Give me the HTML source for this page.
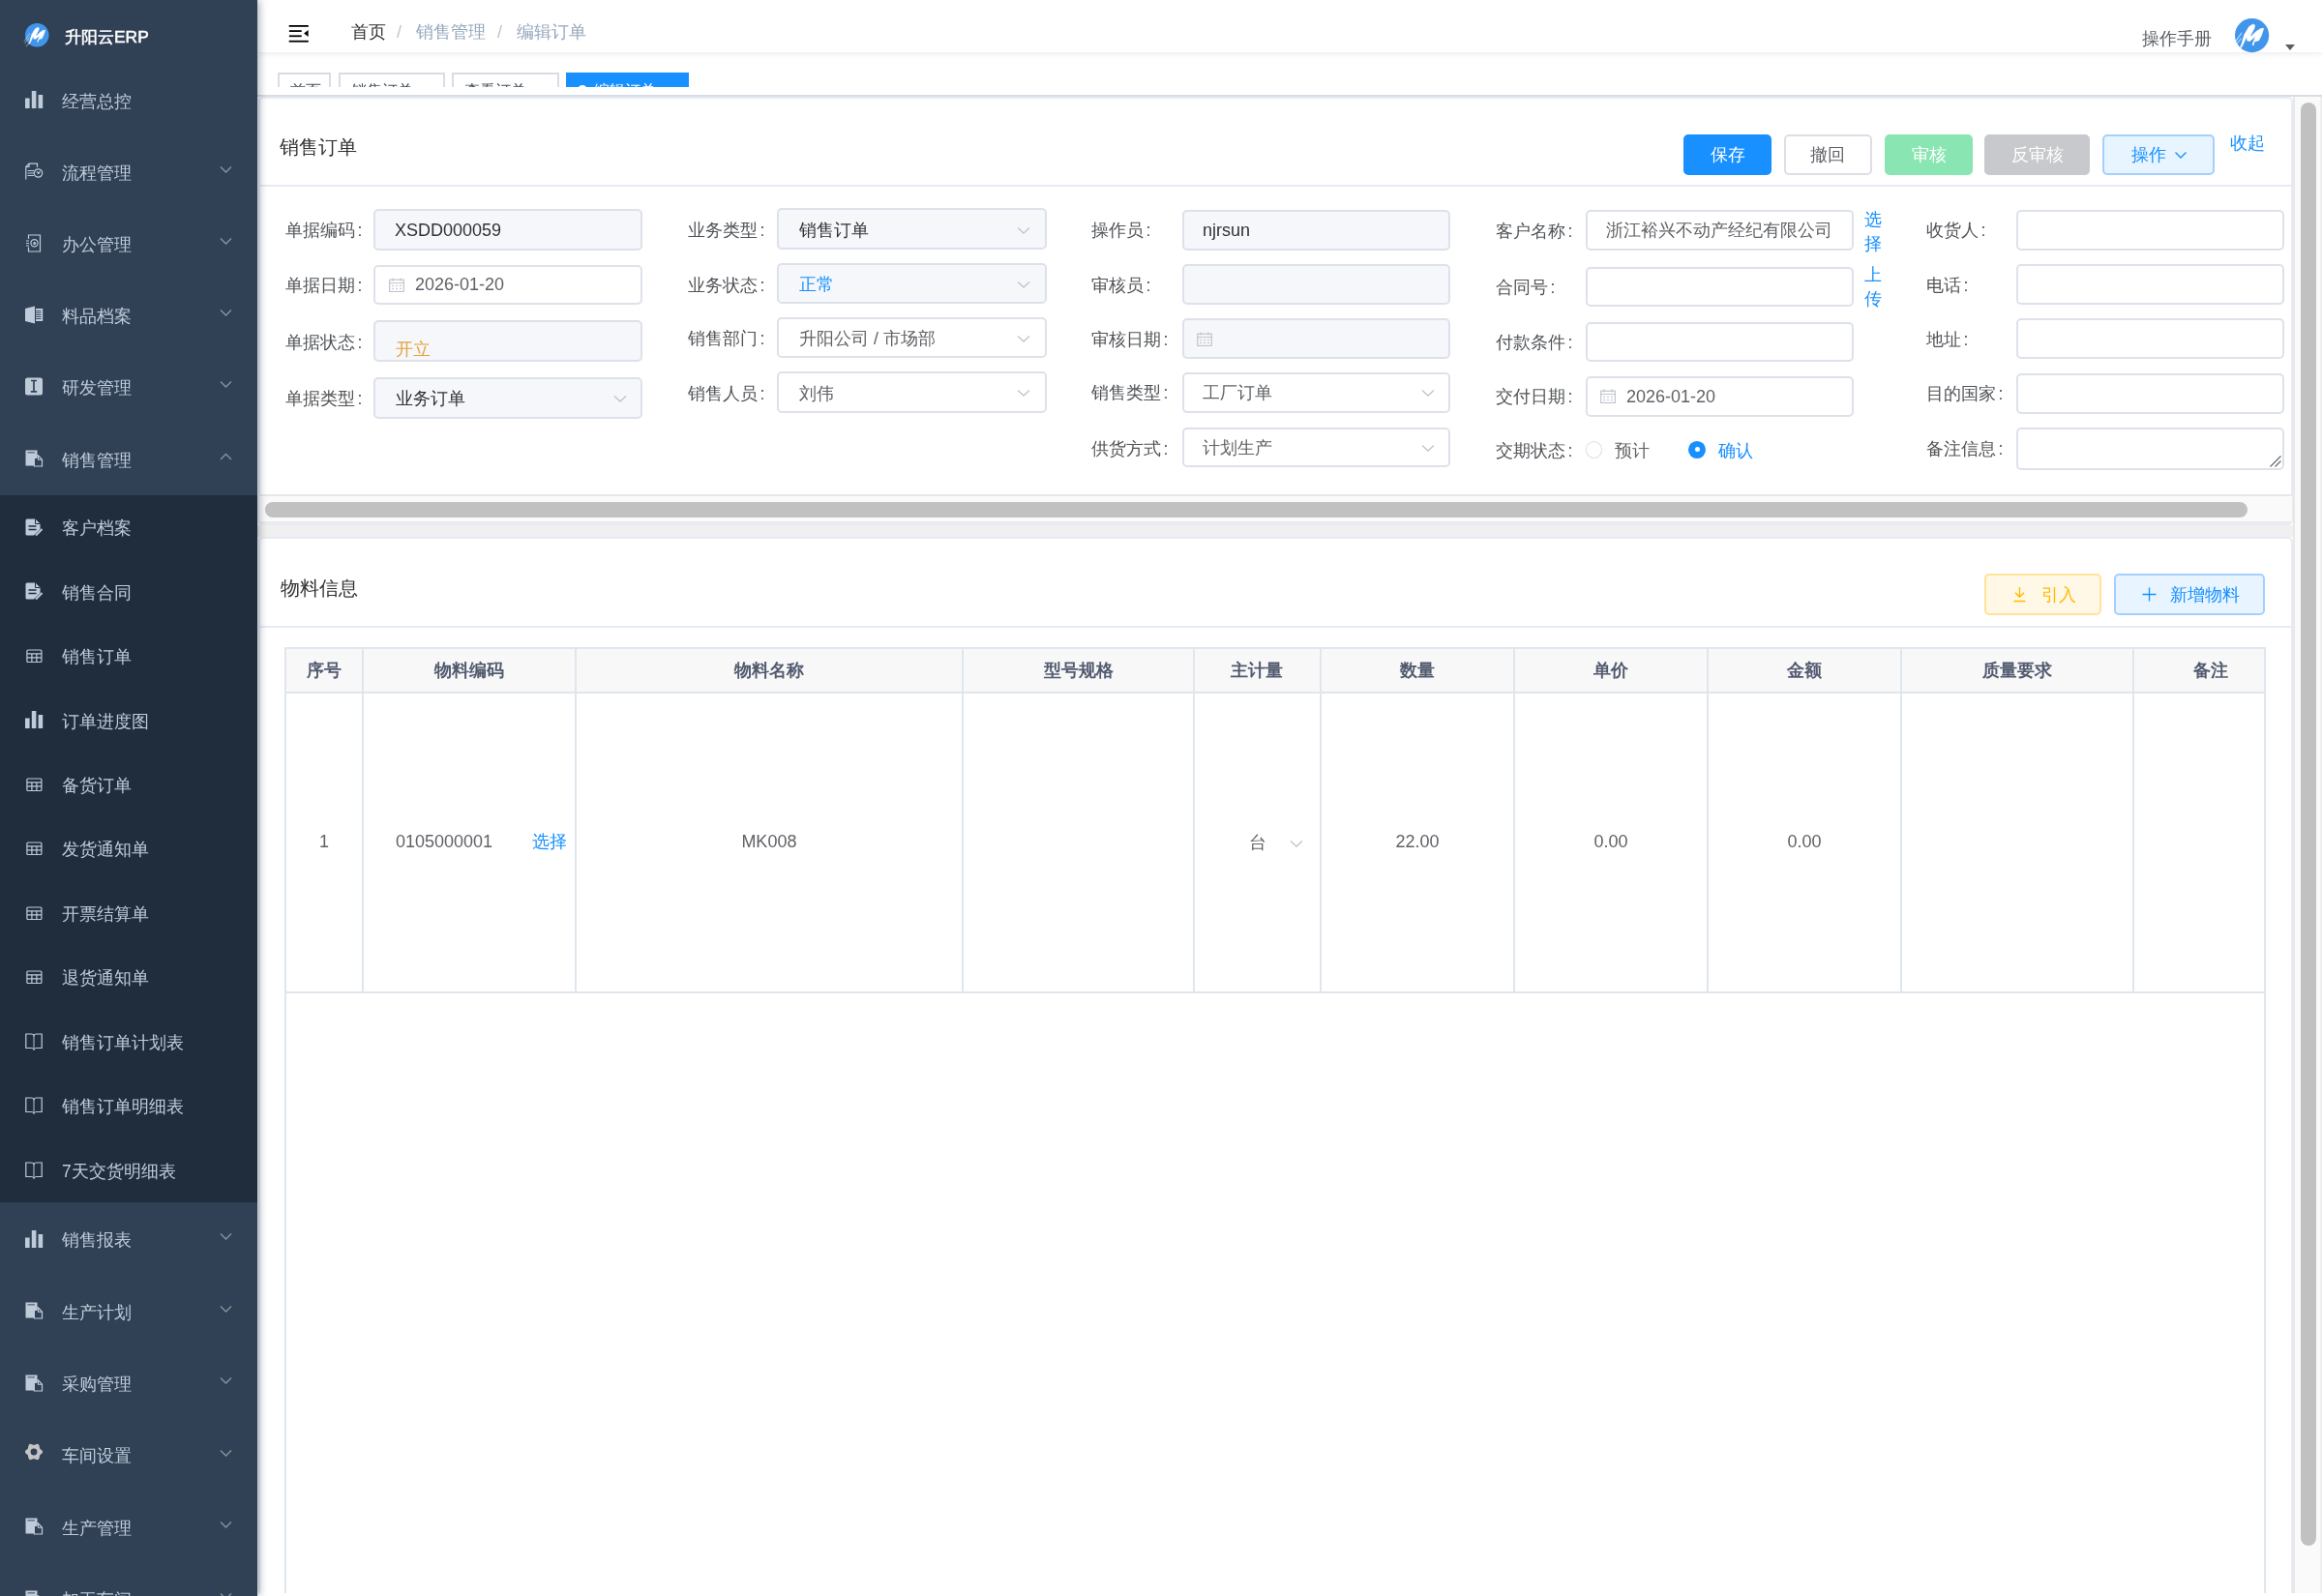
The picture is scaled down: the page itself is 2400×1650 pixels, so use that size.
<!DOCTYPE html><html><head><meta charset="utf-8"><style>
html,body{margin:0;padding:0;width:2400px;height:1650px;overflow:hidden;background:#fff;font-family:"Liberation Sans",sans-serif;}
.t{position:absolute;white-space:nowrap;will-change:transform;}
.r{position:absolute;box-sizing:border-box;}
</style></head><body>
<div class="r" style="left:266.00px;top:0.00px;width:2134.00px;height:1650.00px;background:#fff"></div>
<div class="r" style="left:266.00px;top:542.70px;width:2104.00px;height:12.30px;background:#f0f0f0"></div>
<div class="r" style="left:267.00px;top:100.00px;width:2103.00px;height:442.70px;border:2px solid #e6ebf5;border-radius:5px;background:#fff"></div>
<div class="r" style="left:268.00px;top:191.00px;width:2101.00px;height:2.00px;background:#e6ebf5"></div>
<div class="t" style="left:289.00px;top:136.70px;font-size:20.4px;line-height:30px;color:#303133;font-weight:normal;">销售订单</div>
<div class="r" style="left:1740.00px;top:139.00px;width:91.00px;height:42.00px;background:#1890ff;border:2px solid #1890ff;border-radius:5px"></div>
<div class="t" style="left:1740.00px;width:91.00px;text-align:center;top:145.00px;font-size:17.6px;line-height:30px;color:#fff;font-weight:normal;">保存</div>
<div class="r" style="left:1844.00px;top:139.00px;width:90.50px;height:42.00px;background:#fff;border:2px solid #dcdfe6;border-radius:5px"></div>
<div class="t" style="left:1844.00px;width:90.50px;text-align:center;top:145.00px;font-size:17.6px;line-height:30px;color:#606266;font-weight:normal;">撤回</div>
<div class="r" style="left:1948.00px;top:139.00px;width:91.00px;height:42.00px;background:#89e6b2;border:2px solid #89e6b2;border-radius:5px"></div>
<div class="t" style="left:1948.00px;width:91.00px;text-align:center;top:145.00px;font-size:17.6px;line-height:30px;color:#fff;font-weight:normal;">审核</div>
<div class="r" style="left:2050.60px;top:139.00px;width:109.40px;height:42.00px;background:#c8c9cc;border:2px solid #c8c9cc;border-radius:5px"></div>
<div class="t" style="left:2050.60px;width:109.40px;text-align:center;top:145.00px;font-size:17.6px;line-height:30px;color:#fff;font-weight:normal;">反审核</div>
<div class="r" style="left:2173.30px;top:139.00px;width:116.10px;height:42.00px;background:#e8f4ff;border:2px solid #a3d0fd;border-radius:5px"></div>
<div class="t" style="left:2202.50px;top:145.00px;font-size:17.6px;line-height:30px;color:#1890ff;font-weight:normal;">操作</div>
<svg class="r" style="left:2246.50px;top:155.00px;" width="14" height="10" viewBox="0 0 14 10"><path d="M1.5 2.5 L7 8 L12.5 2.5" fill="none" stroke="#1890ff" stroke-width="1.4"/></svg>
<div class="t" style="left:2305.00px;top:133.40px;font-size:17.6px;line-height:30px;color:#1890ff;font-weight:normal;">收起</div>
<div class="t" style="left:294.50px;top:223.10px;font-size:17.6px;line-height:30px;color:#505357;font-weight:normal;">单据编码<span style="display:inline-block;width:0.55em;text-align:center">:</span></div>
<div class="r" style="left:386.30px;top:216.40px;width:278.20px;height:43.00px;background:#f5f7fa;border:2px solid #dde1e9;border-radius:5px"></div>
<div class="t" style="left:294.50px;top:280.00px;font-size:17.6px;line-height:30px;color:#505357;font-weight:normal;">单据日期<span style="display:inline-block;width:0.55em;text-align:center">:</span></div>
<div class="r" style="left:386.30px;top:273.60px;width:278.20px;height:41.50px;background:#fff;border:2px solid #dde1e9;border-radius:5px"></div>
<div class="t" style="left:294.50px;top:338.80px;font-size:17.6px;line-height:30px;color:#505357;font-weight:normal;">单据状态<span style="display:inline-block;width:0.55em;text-align:center">:</span></div>
<div class="r" style="left:386.30px;top:331.40px;width:278.20px;height:42.90px;background:#f5f7fa;border:2px solid #dde1e9;border-radius:5px"></div>
<div class="t" style="left:294.50px;top:397.00px;font-size:17.6px;line-height:30px;color:#505357;font-weight:normal;">单据类型<span style="display:inline-block;width:0.55em;text-align:center">:</span></div>
<div class="r" style="left:386.30px;top:389.50px;width:278.20px;height:43.10px;background:#f5f7fa;border:2px solid #dde1e9;border-radius:5px"></div>
<div class="t" style="left:711.20px;top:223.10px;font-size:17.6px;line-height:30px;color:#505357;font-weight:normal;">业务类型<span style="display:inline-block;width:0.55em;text-align:center">:</span></div>
<div class="r" style="left:803.40px;top:215.20px;width:278.20px;height:43.00px;background:#f5f7fa;border:2px solid #dde1e9;border-radius:5px"></div>
<div class="t" style="left:711.20px;top:280.00px;font-size:17.6px;line-height:30px;color:#505357;font-weight:normal;">业务状态<span style="display:inline-block;width:0.55em;text-align:center">:</span></div>
<div class="r" style="left:803.40px;top:272.40px;width:278.20px;height:41.80px;background:#f5f7fa;border:2px solid #dde1e9;border-radius:5px"></div>
<div class="t" style="left:711.20px;top:335.30px;font-size:17.6px;line-height:30px;color:#505357;font-weight:normal;">销售部门<span style="display:inline-block;width:0.55em;text-align:center">:</span></div>
<div class="r" style="left:803.40px;top:328.30px;width:278.20px;height:41.90px;background:#fff;border:2px solid #dde1e9;border-radius:5px"></div>
<div class="t" style="left:711.20px;top:392.00px;font-size:17.6px;line-height:30px;color:#505357;font-weight:normal;">销售人员<span style="display:inline-block;width:0.55em;text-align:center">:</span></div>
<div class="r" style="left:803.40px;top:384.30px;width:278.20px;height:42.70px;background:#fff;border:2px solid #dde1e9;border-radius:5px"></div>
<div class="t" style="left:1128.30px;top:222.50px;font-size:17.6px;line-height:30px;color:#505357;font-weight:normal;">操作员<span style="display:inline-block;width:0.55em;text-align:center">:</span></div>
<div class="r" style="left:1221.50px;top:216.50px;width:277.20px;height:42.70px;background:#f5f7fa;border:2px solid #dde1e9;border-radius:5px"></div>
<div class="t" style="left:1128.30px;top:279.90px;font-size:17.6px;line-height:30px;color:#505357;font-weight:normal;">审核员<span style="display:inline-block;width:0.55em;text-align:center">:</span></div>
<div class="r" style="left:1221.50px;top:273.30px;width:277.20px;height:41.70px;background:#f5f7fa;border:2px solid #dde1e9;border-radius:5px"></div>
<div class="t" style="left:1128.30px;top:336.00px;font-size:17.6px;line-height:30px;color:#505357;font-weight:normal;">审核日期<span style="display:inline-block;width:0.55em;text-align:center">:</span></div>
<div class="r" style="left:1221.50px;top:329.30px;width:277.20px;height:41.70px;background:#f5f7fa;border:2px solid #dde1e9;border-radius:5px"></div>
<div class="t" style="left:1128.30px;top:391.30px;font-size:17.6px;line-height:30px;color:#505357;font-weight:normal;">销售类型<span style="display:inline-block;width:0.55em;text-align:center">:</span></div>
<div class="r" style="left:1221.50px;top:384.80px;width:277.20px;height:42.30px;background:#fff;border:2px solid #dde1e9;border-radius:5px"></div>
<div class="t" style="left:1128.30px;top:448.90px;font-size:17.6px;line-height:30px;color:#505357;font-weight:normal;">供货方式<span style="display:inline-block;width:0.55em;text-align:center">:</span></div>
<div class="r" style="left:1221.50px;top:441.50px;width:277.20px;height:41.80px;background:#fff;border:2px solid #dde1e9;border-radius:5px"></div>
<div class="t" style="left:1546.00px;top:223.80px;font-size:17.6px;line-height:30px;color:#505357;font-weight:normal;">客户名称<span style="display:inline-block;width:0.55em;text-align:center">:</span></div>
<div class="r" style="left:1638.50px;top:216.50px;width:277.80px;height:42.70px;background:#fff;border:2px solid #dde1e9;border-radius:5px"></div>
<div class="t" style="left:1546.00px;top:282.10px;font-size:17.6px;line-height:30px;color:#505357;font-weight:normal;">合同号<span style="display:inline-block;width:0.55em;text-align:center">:</span></div>
<div class="r" style="left:1638.50px;top:275.80px;width:277.80px;height:41.70px;background:#fff;border:2px solid #dde1e9;border-radius:5px"></div>
<div class="t" style="left:1546.00px;top:339.30px;font-size:17.6px;line-height:30px;color:#505357;font-weight:normal;">付款条件<span style="display:inline-block;width:0.55em;text-align:center">:</span></div>
<div class="r" style="left:1638.50px;top:332.70px;width:277.80px;height:41.70px;background:#fff;border:2px solid #dde1e9;border-radius:5px"></div>
<div class="t" style="left:1546.00px;top:395.00px;font-size:17.6px;line-height:30px;color:#505357;font-weight:normal;">交付日期<span style="display:inline-block;width:0.55em;text-align:center">:</span></div>
<div class="r" style="left:1638.50px;top:388.50px;width:277.80px;height:42.70px;background:#fff;border:2px solid #dde1e9;border-radius:5px"></div>
<div class="t" style="left:1546.00px;top:451.20px;font-size:17.6px;line-height:30px;color:#505357;font-weight:normal;">交期状态<span style="display:inline-block;width:0.55em;text-align:center">:</span></div>
<div class="t" style="left:1991.10px;top:223.00px;font-size:17.6px;line-height:30px;color:#505357;font-weight:normal;">收货人<span style="display:inline-block;width:0.55em;text-align:center">:</span></div>
<div class="r" style="left:2083.50px;top:216.50px;width:277.80px;height:42.70px;background:#fff;border:2px solid #dde1e9;border-radius:5px"></div>
<div class="t" style="left:1991.10px;top:279.60px;font-size:17.6px;line-height:30px;color:#505357;font-weight:normal;">电话<span style="display:inline-block;width:0.55em;text-align:center">:</span></div>
<div class="r" style="left:2083.50px;top:273.30px;width:277.80px;height:41.70px;background:#fff;border:2px solid #dde1e9;border-radius:5px"></div>
<div class="t" style="left:1991.10px;top:335.70px;font-size:17.6px;line-height:30px;color:#505357;font-weight:normal;">地址<span style="display:inline-block;width:0.55em;text-align:center">:</span></div>
<div class="r" style="left:2083.50px;top:329.30px;width:277.80px;height:41.70px;background:#fff;border:2px solid #dde1e9;border-radius:5px"></div>
<div class="t" style="left:1991.10px;top:391.80px;font-size:17.6px;line-height:30px;color:#505357;font-weight:normal;">目的国家<span style="display:inline-block;width:0.55em;text-align:center">:</span></div>
<div class="r" style="left:2083.50px;top:385.70px;width:277.80px;height:42.30px;background:#fff;border:2px solid #dde1e9;border-radius:5px"></div>
<div class="t" style="left:1991.10px;top:448.60px;font-size:17.6px;line-height:30px;color:#505357;font-weight:normal;">备注信息<span style="display:inline-block;width:0.55em;text-align:center">:</span></div>
<div class="r" style="left:2083.50px;top:441.50px;width:277.80px;height:44.80px;background:#fff;border:2px solid #dde1e9;border-radius:5px"></div>
<div class="t" style="left:407.50px;top:222.70px;font-size:18px;line-height:30px;color:#303133;font-weight:normal;">XSDD000059</div>
<svg class="r" style="left:402.00px;top:286.80px;" width="16" height="15" viewBox="0 0 16 15"><rect x="0.7" y="2.2" width="14.6" height="12.3" fill="none" stroke="#c0c4cc" stroke-width="1.2"/><line x1="0.7" y1="5.6" x2="15.3" y2="5.6" stroke="#c0c4cc" stroke-width="1"/><line x1="4" y1="0.5" x2="4" y2="3.5" stroke="#c0c4cc" stroke-width="1.2"/><line x1="12" y1="0.5" x2="12" y2="3.5" stroke="#c0c4cc" stroke-width="1.2"/><g fill="#c0c4cc"><rect x="3.3" y="7.8" width="1.6" height="1.4"/><rect x="7.2" y="7.8" width="1.6" height="1.4"/><rect x="11.1" y="7.8" width="1.6" height="1.4"/><rect x="3.3" y="10.8" width="1.6" height="1.4"/><rect x="7.2" y="10.8" width="1.6" height="1.4"/><rect x="11.1" y="10.8" width="1.6" height="1.4"/></g></svg>
<div class="t" style="left:428.50px;top:279.30px;font-size:18px;line-height:30px;color:#606266;font-weight:normal;">2026-01-20</div>
<div class="t" style="left:408.50px;top:345.60px;font-size:17.6px;line-height:30px;color:#e6a23c;font-weight:normal;">开立</div>
<div class="t" style="left:408.50px;top:397.00px;font-size:17.6px;line-height:30px;color:#303133;font-weight:normal;">业务订单</div>
<svg class="r" style="left:633.50px;top:407.60px;" width="14" height="9" viewBox="0 0 14 9"><path d="M1 1.5 L7.0 7 L13 1.5" fill="none" stroke="#c0c4cc" stroke-width="1.3"/></svg>
<div class="t" style="left:825.80px;top:223.00px;font-size:17.6px;line-height:30px;color:#303133;font-weight:normal;">销售订单</div>
<svg class="r" style="left:1050.60px;top:233.60px;" width="14" height="9" viewBox="0 0 14 9"><path d="M1 1.5 L7.0 7 L13 1.5" fill="none" stroke="#c0c4cc" stroke-width="1.3"/></svg>
<div class="t" style="left:825.80px;top:279.20px;font-size:17.6px;line-height:30px;color:#1890ff;font-weight:normal;">正常</div>
<svg class="r" style="left:1050.60px;top:289.70px;" width="14" height="9" viewBox="0 0 14 9"><path d="M1 1.5 L7.0 7 L13 1.5" fill="none" stroke="#c0c4cc" stroke-width="1.3"/></svg>
<div class="t" style="left:825.80px;top:335.30px;font-size:17.6px;line-height:30px;color:#606266;font-weight:normal;">升阳公司 / 市场部</div>
<svg class="r" style="left:1050.60px;top:345.90px;" width="14" height="9" viewBox="0 0 14 9"><path d="M1 1.5 L7.0 7 L13 1.5" fill="none" stroke="#c0c4cc" stroke-width="1.3"/></svg>
<div class="t" style="left:825.80px;top:391.50px;font-size:17.6px;line-height:30px;color:#606266;font-weight:normal;">刘伟</div>
<svg class="r" style="left:1050.60px;top:402.10px;" width="14" height="9" viewBox="0 0 14 9"><path d="M1 1.5 L7.0 7 L13 1.5" fill="none" stroke="#c0c4cc" stroke-width="1.3"/></svg>
<div class="t" style="left:1242.50px;top:223.00px;font-size:18px;line-height:30px;color:#303133;font-weight:normal;">njrsun</div>
<svg class="r" style="left:1237.00px;top:343.00px;" width="16" height="15" viewBox="0 0 16 15"><rect x="0.7" y="2.2" width="14.6" height="12.3" fill="none" stroke="#c0c4cc" stroke-width="1.2"/><line x1="0.7" y1="5.6" x2="15.3" y2="5.6" stroke="#c0c4cc" stroke-width="1"/><line x1="4" y1="0.5" x2="4" y2="3.5" stroke="#c0c4cc" stroke-width="1.2"/><line x1="12" y1="0.5" x2="12" y2="3.5" stroke="#c0c4cc" stroke-width="1.2"/><g fill="#c0c4cc"><rect x="3.3" y="7.8" width="1.6" height="1.4"/><rect x="7.2" y="7.8" width="1.6" height="1.4"/><rect x="11.1" y="7.8" width="1.6" height="1.4"/><rect x="3.3" y="10.8" width="1.6" height="1.4"/><rect x="7.2" y="10.8" width="1.6" height="1.4"/><rect x="11.1" y="10.8" width="1.6" height="1.4"/></g></svg>
<div class="t" style="left:1242.80px;top:391.30px;font-size:17.6px;line-height:30px;color:#606266;font-weight:normal;">工厂订单</div>
<svg class="r" style="left:1469.00px;top:401.80px;" width="14" height="9" viewBox="0 0 14 9"><path d="M1 1.5 L7.0 7 L13 1.5" fill="none" stroke="#c0c4cc" stroke-width="1.3"/></svg>
<div class="t" style="left:1242.80px;top:448.00px;font-size:17.6px;line-height:30px;color:#606266;font-weight:normal;">计划生产</div>
<svg class="r" style="left:1469.00px;top:458.50px;" width="14" height="9" viewBox="0 0 14 9"><path d="M1 1.5 L7.0 7 L13 1.5" fill="none" stroke="#c0c4cc" stroke-width="1.3"/></svg>
<div class="t" style="left:1660.00px;top:223.00px;font-size:17.6px;line-height:30px;color:#606266;font-weight:normal;">浙江裕兴不动产经纪有限公司</div>
<svg class="r" style="left:1654.00px;top:402.00px;" width="16" height="15" viewBox="0 0 16 15"><rect x="0.7" y="2.2" width="14.6" height="12.3" fill="none" stroke="#c0c4cc" stroke-width="1.2"/><line x1="0.7" y1="5.6" x2="15.3" y2="5.6" stroke="#c0c4cc" stroke-width="1"/><line x1="4" y1="0.5" x2="4" y2="3.5" stroke="#c0c4cc" stroke-width="1.2"/><line x1="12" y1="0.5" x2="12" y2="3.5" stroke="#c0c4cc" stroke-width="1.2"/><g fill="#c0c4cc"><rect x="3.3" y="7.8" width="1.6" height="1.4"/><rect x="7.2" y="7.8" width="1.6" height="1.4"/><rect x="11.1" y="7.8" width="1.6" height="1.4"/><rect x="3.3" y="10.8" width="1.6" height="1.4"/><rect x="7.2" y="10.8" width="1.6" height="1.4"/><rect x="11.1" y="10.8" width="1.6" height="1.4"/></g></svg>
<div class="t" style="left:1680.50px;top:394.80px;font-size:18px;line-height:30px;color:#606266;font-weight:normal;">2026-01-20</div>
<div class="t" style="left:1927.00px;top:211.60px;font-size:17.6px;line-height:30px;color:#1890ff;font-weight:normal;">选</div>
<div class="t" style="left:1927.00px;top:236.90px;font-size:17.6px;line-height:30px;color:#1890ff;font-weight:normal;">择</div>
<div class="t" style="left:1927.00px;top:268.60px;font-size:17.6px;line-height:30px;color:#1890ff;font-weight:normal;">上</div>
<div class="t" style="left:1927.00px;top:294.30px;font-size:17.6px;line-height:30px;color:#1890ff;font-weight:normal;">传</div>
<div class="r" style="left:1638.50px;top:456.00px;width:17.10px;height:17.50px;border:1px solid #dcdfe6;border-radius:50%;background:#fff"></div>
<div class="t" style="left:1668.50px;top:451.20px;font-size:17.6px;line-height:30px;color:#606266;font-weight:normal;">预计</div>
<div class="r" style="left:1745.20px;top:456.00px;width:17.80px;height:17.80px;background:#1890ff;border-radius:50%"></div>
<div class="r" style="left:1751.60px;top:462.40px;width:5.00px;height:5.00px;background:#fff;border-radius:50%"></div>
<div class="t" style="left:1776.00px;top:451.20px;font-size:17.6px;line-height:30px;color:#1890ff;font-weight:normal;">确认</div>
<svg class="r" style="left:2345.00px;top:470.00px;" width="14" height="14" viewBox="0 0 14 14"><path d="M1.5 12.5 L12.5 1.5 M6.5 12.5 L12.5 6.5" stroke="#606266" stroke-width="1.1"/></svg>
<div class="r" style="left:268.00px;top:511.00px;width:2101.00px;height:1.70px;background:#e8e8e8"></div>
<div class="r" style="left:268.00px;top:512.70px;width:2101.00px;height:26.60px;background:#fafafa"></div>
<div class="r" style="left:268.00px;top:539.30px;width:2101.00px;height:1.70px;background:#ebebeb"></div>
<div class="r" style="left:273.80px;top:518.90px;width:2049.20px;height:15.90px;background:#c1c1c1;border-radius:8px"></div>
<div class="r" style="left:267.00px;top:555.00px;width:2103.00px;height:1145.00px;border:2px solid #e6ebf5;border-radius:5px;background:#fff"></div>
<div class="r" style="left:268.00px;top:647.00px;width:2101.00px;height:2.00px;background:#e6ebf5"></div>
<div class="t" style="left:289.50px;top:593.20px;font-size:20.4px;line-height:30px;color:#303133;font-weight:normal;">物料信息</div>
<div class="r" style="left:2051.40px;top:593.40px;width:120.30px;height:43.00px;background:#fff8e6;border:2px solid #ffe399;border-radius:5px"></div>
<svg class="r" style="left:2080.00px;top:605.50px;" width="15" height="17" viewBox="0 0 15 17"><path d="M7.5 1 V11 M3 6.8 L7.5 11.3 L12 6.8 M1.5 15.5 H13.5" fill="none" stroke="#ffba00" stroke-width="1.4"/></svg>
<div class="t" style="left:2109.50px;top:599.90px;font-size:17.6px;line-height:30px;color:#ffba00;font-weight:normal;">引入</div>
<div class="r" style="left:2185.30px;top:593.40px;width:156.10px;height:43.00px;background:#e8f4ff;border:2px solid #a3d0fd;border-radius:5px"></div>
<svg class="r" style="left:2214.00px;top:607.00px;" width="15" height="15" viewBox="0 0 15 15"><path d="M7.5 0.5 V14.5 M0.5 7.5 H14.5" fill="none" stroke="#1890ff" stroke-width="1.3"/></svg>
<div class="t" style="left:2243.00px;top:599.90px;font-size:17.6px;line-height:30px;color:#1890ff;font-weight:normal;">新增物料</div>
<div class="r" style="left:294.60px;top:669.50px;width:2047.00px;height:46.50px;background:#f8f8f9"></div>
<div class="r" style="left:294.00px;top:669.00px;width:2047.60px;height:2.00px;background:#dfe6ec"></div>
<div class="r" style="left:294.00px;top:715.00px;width:2047.60px;height:2.00px;background:#dfe6ec"></div>
<div class="r" style="left:294.00px;top:1025.00px;width:2047.60px;height:2.00px;background:#dfe6ec"></div>
<div class="r" style="left:293.60px;top:669.30px;width:2.00px;height:977.70px;background:#dfe6ec"></div>
<div class="r" style="left:373.70px;top:669.30px;width:2.00px;height:356.70px;background:#dfe6ec"></div>
<div class="r" style="left:593.90px;top:669.30px;width:2.00px;height:356.70px;background:#dfe6ec"></div>
<div class="r" style="left:993.70px;top:669.30px;width:2.00px;height:356.70px;background:#dfe6ec"></div>
<div class="r" style="left:1233.30px;top:669.30px;width:2.00px;height:356.70px;background:#dfe6ec"></div>
<div class="r" style="left:1363.60px;top:669.30px;width:2.00px;height:356.70px;background:#dfe6ec"></div>
<div class="r" style="left:1563.50px;top:669.30px;width:2.00px;height:356.70px;background:#dfe6ec"></div>
<div class="r" style="left:1763.70px;top:669.30px;width:2.00px;height:356.70px;background:#dfe6ec"></div>
<div class="r" style="left:1963.90px;top:669.30px;width:2.00px;height:356.70px;background:#dfe6ec"></div>
<div class="r" style="left:2204.10px;top:669.30px;width:2.00px;height:356.70px;background:#dfe6ec"></div>
<div class="r" style="left:2339.60px;top:669.30px;width:2.00px;height:977.70px;background:#dfe6ec"></div>
<div class="t" style="left:294.60px;width:80.10px;text-align:center;top:677.60px;font-size:17.6px;line-height:30px;color:#515a6e;font-weight:bold;">序号</div>
<div class="t" style="left:374.70px;width:220.20px;text-align:center;top:677.60px;font-size:17.6px;line-height:30px;color:#515a6e;font-weight:bold;">物料编码</div>
<div class="t" style="left:594.90px;width:399.80px;text-align:center;top:677.60px;font-size:17.6px;line-height:30px;color:#515a6e;font-weight:bold;">物料名称</div>
<div class="t" style="left:994.70px;width:239.60px;text-align:center;top:677.60px;font-size:17.6px;line-height:30px;color:#515a6e;font-weight:bold;">型号规格</div>
<div class="t" style="left:1234.30px;width:130.30px;text-align:center;top:677.60px;font-size:17.6px;line-height:30px;color:#515a6e;font-weight:bold;">主计量</div>
<div class="t" style="left:1364.60px;width:199.90px;text-align:center;top:677.60px;font-size:17.6px;line-height:30px;color:#515a6e;font-weight:bold;">数量</div>
<div class="t" style="left:1564.50px;width:200.20px;text-align:center;top:677.60px;font-size:17.6px;line-height:30px;color:#515a6e;font-weight:bold;">单价</div>
<div class="t" style="left:1764.70px;width:200.20px;text-align:center;top:677.60px;font-size:17.6px;line-height:30px;color:#515a6e;font-weight:bold;">金额</div>
<div class="t" style="left:1964.90px;width:240.20px;text-align:center;top:677.60px;font-size:17.6px;line-height:30px;color:#515a6e;font-weight:bold;">质量要求</div>
<div class="t" style="left:2205.10px;width:159.50px;text-align:center;top:677.60px;font-size:17.6px;line-height:30px;color:#515a6e;font-weight:bold;">备注</div>
<div class="t" style="left:294.60px;width:80.10px;text-align:center;top:855.30px;font-size:18px;line-height:30px;color:#606266;font-weight:normal;">1</div>
<div class="t" style="left:408.80px;top:855.30px;font-size:18px;line-height:30px;color:#606266;font-weight:normal;">0105000001</div>
<div class="t" style="left:550.00px;top:855.30px;font-size:17.6px;line-height:30px;color:#1890ff;font-weight:normal;">选择</div>
<div class="t" style="left:594.90px;width:399.80px;text-align:center;top:855.30px;font-size:18px;line-height:30px;color:#606266;font-weight:normal;">MK008</div>
<div class="t" style="left:1291.00px;top:855.80px;font-size:17.6px;line-height:30px;color:#606266;font-weight:normal;">台</div>
<svg class="r" style="left:1332.60px;top:867.50px;" width="14" height="9" viewBox="0 0 14 9"><path d="M1 1.5 L7.0 7 L13 1.5" fill="none" stroke="#c0c4cc" stroke-width="1.3"/></svg>
<div class="t" style="left:1364.60px;width:199.90px;text-align:center;top:855.30px;font-size:18px;line-height:30px;color:#606266;font-weight:normal;">22.00</div>
<div class="t" style="left:1564.50px;width:200.20px;text-align:center;top:855.30px;font-size:18px;line-height:30px;color:#606266;font-weight:normal;">0.00</div>
<div class="t" style="left:1764.70px;width:200.20px;text-align:center;top:855.30px;font-size:18px;line-height:30px;color:#606266;font-weight:normal;">0.00</div>
<div class="r" style="left:2370.00px;top:100.00px;width:2.00px;height:1550.00px;background:#e8e8e8"></div>
<div class="r" style="left:2372.00px;top:100.00px;width:26.00px;height:1550.00px;background:#fafafa"></div>
<div class="r" style="left:2398.00px;top:100.00px;width:2.00px;height:1550.00px;background:#efefef"></div>
<div class="r" style="left:2378.00px;top:106.00px;width:16.00px;height:1492.00px;background:#c1c1c1;border-radius:8px"></div>
<div class="r" style="left:266.00px;top:1647.00px;width:2134.00px;height:3.00px;background:#fff"></div>
<div class="r" style="left:266.00px;top:54.00px;width:2134.00px;height:44.00px;background:#fff"></div>
<div class="r" style="left:266.00px;top:97.80px;width:2134.00px;height:2.20px;background:#d8dce5"></div>
<div class="r" style="left:266px;top:54px;width:2134px;height:35.7px;overflow:hidden">
<div class="r" style="left:21.20px;top:20.90px;width:54.50px;height:36px;background:#fff;border:2px solid #d8dce5"></div>
<div class="t" style="left:33.70px;top:25.90px;font-size:16px;line-height:28px;color:#495060">首页</div>
<div class="r" style="left:84.20px;top:20.90px;width:109.50px;height:36px;background:#fff;border:2px solid #d8dce5"></div>
<div class="t" style="left:96.70px;top:25.90px;font-size:16px;line-height:28px;color:#495060">销售订单</div>
<div class="r" style="left:201.00px;top:20.90px;width:110.50px;height:36px;background:#fff;border:2px solid #d8dce5"></div>
<div class="t" style="left:213.50px;top:25.90px;font-size:16px;line-height:28px;color:#495060">查看订单</div>
<div class="r" style="left:318.90px;top:20.90px;width:126.70px;height:36px;background:#1890ff;border:1px solid #1890ff"></div>
<div class="r" style="left:330.90px;top:33.90px;width:10px;height:10px;border-radius:50%;background:#fff"></div>
<div class="t" style="left:347.90px;top:25.90px;font-size:16px;line-height:28px;color:#fff">编辑订单</div>
</div>
<div class="r" style="left:266.00px;top:0.00px;width:2134.00px;height:54.00px;background:#fff;box-shadow:0 1px 6px rgba(0,21,41,.1)"></div>
<svg class="r" style="left:298.00px;top:25.00px;" width="22" height="20" viewBox="0 0 22 20"><rect x="0.7" y="1" width="20.1" height="1.8" fill="#000"/><rect x="0.9" y="6.2" width="12.8" height="1.8" fill="#000"/><rect x="0.9" y="11.4" width="12.8" height="1.8" fill="#000"/><rect x="0.7" y="16.8" width="20.1" height="1.8" fill="#000"/><path d="M20.6 6.1 L16.1 9.5 L20.6 12.9 Z" fill="#000"/></svg>
<div class="t" style="left:362.50px;top:17.70px;font-size:17.6px;line-height:30px;color:#303133;font-weight:normal;">首页</div>
<div class="t" style="left:410.00px;top:17.70px;font-size:18px;line-height:30px;color:#c0c4cc;font-weight:normal;">/</div>
<div class="t" style="left:430.30px;top:17.70px;font-size:17.6px;line-height:30px;color:#97a8be;font-weight:normal;">销售管理</div>
<div class="t" style="left:514.00px;top:17.70px;font-size:18px;line-height:30px;color:#c0c4cc;font-weight:normal;">/</div>
<div class="t" style="left:534.30px;top:17.70px;font-size:17.6px;line-height:30px;color:#97a8be;font-weight:normal;">编辑订单</div>
<div class="t" style="left:2213.50px;top:24.60px;font-size:17.6px;line-height:30px;color:#5a5e66;font-weight:normal;">操作手册</div>
<svg class="r" style="left:2310.00px;top:18.50px;overflow:visible" width="35.2" height="35.2" viewBox="0 0 35.2 35.2"><circle cx="17.6" cy="17.6" r="17.6" fill="#4196ec"/><g transform="scale(1.0000)"><polygon points="5.60,31.20 9.60,17.00 14.60,8.60 18.73,5.93 20.62,7.01 20.08,10.24 16.04,17.79 16.58,18.87 21.97,13.48 26.82,10.51 29.78,10.24 27.36,17.79 24.66,22.91 21.97,23.45 20.08,24.26 19.27,27.76 17.92,27.22 21.43,18.60 15.50,23.45 12.80,23.18 12.26,18.87 7.60,28.60" fill="#fff" stroke="#fff" stroke-width="0.6" stroke-linejoin="round"/><path d="M-1.5 26.8 L7 14.8 M-0.5 30 L6.5 20.5 M1.5 34.5 L7 27.5" stroke="#fff" stroke-opacity=".6" stroke-width="1.2"/></g></svg>
<svg class="r" style="left:2362.00px;top:46.00px;" width="10" height="6.5" viewBox="0 0 10 6.5"><path d="M0 0 H10 L5 6 Z" fill="#5a5e66"/></svg>
<div class="r" style="left:0.00px;top:0.00px;width:266.00px;height:1650.00px;background:#304156;box-shadow:2px 0 8px rgba(0,21,41,.35)"></div>
<div class="r" style="left:0.00px;top:512.00px;width:266.00px;height:731.30px;background:#1f2d3d"></div>
<svg class="r" style="left:26.35px;top:24.15px;overflow:visible" width="24.5" height="24.5" viewBox="0 0 24.5 24.5"><circle cx="12.25" cy="12.25" r="12.25" fill="#4196ec"/><g transform="scale(0.6960)"><polygon points="5.60,31.20 9.60,17.00 14.60,8.60 18.73,5.93 20.62,7.01 20.08,10.24 16.04,17.79 16.58,18.87 21.97,13.48 26.82,10.51 29.78,10.24 27.36,17.79 24.66,22.91 21.97,23.45 20.08,24.26 19.27,27.76 17.92,27.22 21.43,18.60 15.50,23.45 12.80,23.18 12.26,18.87 7.60,28.60" fill="#fff" stroke="#fff" stroke-width="0.6" stroke-linejoin="round"/><path d="M-1.5 26.8 L7 14.8 M-0.5 30 L6.5 20.5 M1.5 34.5 L7 27.5" stroke="#fff" stroke-opacity=".6" stroke-width="1.2"/></g></svg>
<div class="t" style="left:66.50px;top:22.90px;font-size:17.4px;line-height:30px;color:#fff;font-weight:normal;-webkit-text-stroke:0.5px #fff">升阳云ERP</div>
<svg class="r" style="left:25.80px;top:94.20px;" width="19" height="19" viewBox="0 0 19 19"><g fill="#bfcbd9"><rect x="0" y="7.5" width="4.6" height="10.5"/><rect x="6.8" y="0" width="4.6" height="18"/><rect x="13.6" y="4" width="4.6" height="14"/></g></svg>
<div class="t" style="left:64.00px;top:89.60px;font-size:17.6px;line-height:30px;color:#bfcbd9;font-weight:normal;">经营总控</div>
<svg class="r" style="left:25.80px;top:168.10px;" width="19" height="19" viewBox="0 0 19 19"><g fill="none" stroke="#bfcbd9" stroke-width="1.2"><path d="M0.8 17.5 V4.5 L4 1.2 H12.5 V5"/><path d="M4 1.2 V4.5 H0.8"/><path d="M2.5 8.5 H9 M2.5 11 H9 M2.5 13.5 H9"/><circle cx="13.5" cy="11" r="4.2"/><path d="M12 9.5 L13.8 11.5 L15.5 9"/></g></svg>
<div class="t" style="left:64.00px;top:163.80px;font-size:17.6px;line-height:30px;color:#bfcbd9;font-weight:normal;">流程管理</div>
<svg class="r" style="left:226.50px;top:171.00px;" width="13" height="9" viewBox="0 0 13 9"><path d="M1 1.5 L6.5 7 L12 1.5" fill="none" stroke="#909399" stroke-width="1.3"/></svg>
<svg class="r" style="left:25.80px;top:242.20px;" width="19" height="19" viewBox="0 0 19 19"><g fill="none" stroke="#bfcbd9" stroke-width="1.2"><path d="M3.5 5 V1 H15.5 V18 H3.5 V13.5"/><path d="M1 7 H4 M1 9.5 H4 M1 12 H4"/><circle cx="9.5" cy="9.2" r="3.6"/></g><circle cx="9.7" cy="9.4" r="1.5" fill="#bfcbd9"/></svg>
<div class="t" style="left:64.00px;top:237.60px;font-size:17.6px;line-height:30px;color:#bfcbd9;font-weight:normal;">办公管理</div>
<svg class="r" style="left:226.50px;top:244.80px;" width="13" height="9" viewBox="0 0 13 9"><path d="M1 1.5 L6.5 7 L12 1.5" fill="none" stroke="#909399" stroke-width="1.3"/></svg>
<svg class="r" style="left:25.80px;top:316.00px;" width="19" height="19" viewBox="0 0 19 19"><path d="M0 3 L10 0.5 V18.5 L0 16 Z" fill="#bfcbd9"/><rect x="11" y="3" width="7.2" height="13" fill="#bfcbd9"/><g stroke="#304156" stroke-width="0.9"><path d="M11 5.5 H16.5 M11 7.5 H16.5 M11 9.5 H16.5 M11 11.5 H16.5 M11 13.5 H16.5"/></g></svg>
<div class="t" style="left:64.00px;top:311.70px;font-size:17.6px;line-height:30px;color:#bfcbd9;font-weight:normal;">料品档案</div>
<svg class="r" style="left:226.50px;top:318.90px;" width="13" height="9" viewBox="0 0 13 9"><path d="M1 1.5 L6.5 7 L12 1.5" fill="none" stroke="#909399" stroke-width="1.3"/></svg>
<svg class="r" style="left:25.80px;top:390.20px;" width="19" height="19" viewBox="0 0 19 19"><rect x="0" y="0.5" width="18" height="18" rx="2.5" fill="#bfcbd9"/><path d="M6 3.5 H12 M9 3.5 V14.8 M5.8 14.8 H12.2" stroke="#304156" stroke-width="1.7" fill="none"/></svg>
<div class="t" style="left:64.00px;top:385.90px;font-size:17.6px;line-height:30px;color:#bfcbd9;font-weight:normal;">研发管理</div>
<svg class="r" style="left:226.50px;top:393.10px;" width="13" height="9" viewBox="0 0 13 9"><path d="M1 1.5 L6.5 7 L12 1.5" fill="none" stroke="#909399" stroke-width="1.3"/></svg>
<svg class="r" style="left:25.80px;top:465.20px;" width="19" height="19" viewBox="0 0 19 19"><path d="M0.5 0.5 H12.5 V9 H9 V16.5 H0.5 Z" fill="#bfcbd9"/><rect x="2.5" y="2" width="7.5" height="1.6" fill="#304156" opacity=".6"/><path d="M9.4 5.8 H13.5 L17.5 10.3 V17 H9.4 Z" fill="none" stroke="#bfcbd9" stroke-width="1.2"/><path d="M13.5 5.8 V10.3 H17.5" fill="none" stroke="#bfcbd9" stroke-width="1.1"/></svg>
<div class="t" style="left:64.00px;top:460.60px;font-size:17.6px;line-height:30px;color:#bfcbd9;font-weight:normal;">销售管理</div>
<svg class="r" style="left:226.50px;top:467.80px;" width="13" height="9" viewBox="0 0 13 9"><path d="M1 7 L6.5 1.5 L12 7" fill="none" stroke="#909399" stroke-width="1.3"/></svg>
<svg class="r" style="left:25.80px;top:535.80px;" width="19" height="19" viewBox="0 0 19 19"><path d="M2 0.5 H10.5 L15.5 5.5 V11 L9 17.5 H2 Q0.5 17.5 0.5 16 V2 Q0.5 0.5 2 0.5 Z" fill="#bfcbd9"/><path d="M10.5 0.5 V5.5 H15.5" fill="none" stroke="#1f2d3d" stroke-width="1"/><path d="M3.5 8 H11.5 M3.5 11.5 H11.5" stroke="#1f2d3d" stroke-width="1.6"/><path d="M11 17.5 L17.5 11" stroke="#bfcbd9" stroke-width="2"/></svg>
<div class="t" style="left:64.00px;top:531.20px;font-size:17.6px;line-height:30px;color:#bfcbd9;font-weight:normal;">客户档案</div>
<svg class="r" style="left:25.80px;top:602.25px;" width="19" height="19" viewBox="0 0 19 19"><path d="M2 0.5 H10.5 L15.5 5.5 V11 L9 17.5 H2 Q0.5 17.5 0.5 16 V2 Q0.5 0.5 2 0.5 Z" fill="#bfcbd9"/><path d="M10.5 0.5 V5.5 H15.5" fill="none" stroke="#1f2d3d" stroke-width="1"/><path d="M3.5 8 H11.5 M3.5 11.5 H11.5" stroke="#1f2d3d" stroke-width="1.6"/><path d="M11 17.5 L17.5 11" stroke="#bfcbd9" stroke-width="2"/></svg>
<div class="t" style="left:64.00px;top:597.65px;font-size:17.6px;line-height:30px;color:#bfcbd9;font-weight:normal;">销售合同</div>
<svg class="r" style="left:25.80px;top:668.70px;" width="19" height="19" viewBox="0 0 19 19"><g fill="none" stroke="#bfcbd9" stroke-width="1.2"><rect x="1.9" y="3" width="15" height="12.5" rx="1"/><path d="M1.9 6.8 H16.9 M1.9 10.8 H16.9 M6.9 6.8 V15.5 M11.9 6.8 V15.5"/></g></svg>
<div class="t" style="left:64.00px;top:664.10px;font-size:17.6px;line-height:30px;color:#bfcbd9;font-weight:normal;">销售订单</div>
<svg class="r" style="left:25.80px;top:735.15px;" width="19" height="19" viewBox="0 0 19 19"><g fill="#bfcbd9"><rect x="0" y="7.5" width="4.6" height="10.5"/><rect x="6.8" y="0" width="4.6" height="18"/><rect x="13.6" y="4" width="4.6" height="14"/></g></svg>
<div class="t" style="left:64.00px;top:730.55px;font-size:17.6px;line-height:30px;color:#bfcbd9;font-weight:normal;">订单进度图</div>
<svg class="r" style="left:25.80px;top:801.60px;" width="19" height="19" viewBox="0 0 19 19"><g fill="none" stroke="#bfcbd9" stroke-width="1.2"><rect x="1.9" y="3" width="15" height="12.5" rx="1"/><path d="M1.9 6.8 H16.9 M1.9 10.8 H16.9 M6.9 6.8 V15.5 M11.9 6.8 V15.5"/></g></svg>
<div class="t" style="left:64.00px;top:797.00px;font-size:17.6px;line-height:30px;color:#bfcbd9;font-weight:normal;">备货订单</div>
<svg class="r" style="left:25.80px;top:868.05px;" width="19" height="19" viewBox="0 0 19 19"><g fill="none" stroke="#bfcbd9" stroke-width="1.2"><rect x="1.9" y="3" width="15" height="12.5" rx="1"/><path d="M1.9 6.8 H16.9 M1.9 10.8 H16.9 M6.9 6.8 V15.5 M11.9 6.8 V15.5"/></g></svg>
<div class="t" style="left:64.00px;top:863.45px;font-size:17.6px;line-height:30px;color:#bfcbd9;font-weight:normal;">发货通知单</div>
<svg class="r" style="left:25.80px;top:934.50px;" width="19" height="19" viewBox="0 0 19 19"><g fill="none" stroke="#bfcbd9" stroke-width="1.2"><rect x="1.9" y="3" width="15" height="12.5" rx="1"/><path d="M1.9 6.8 H16.9 M1.9 10.8 H16.9 M6.9 6.8 V15.5 M11.9 6.8 V15.5"/></g></svg>
<div class="t" style="left:64.00px;top:929.90px;font-size:17.6px;line-height:30px;color:#bfcbd9;font-weight:normal;">开票结算单</div>
<svg class="r" style="left:25.80px;top:1000.95px;" width="19" height="19" viewBox="0 0 19 19"><g fill="none" stroke="#bfcbd9" stroke-width="1.2"><rect x="1.9" y="3" width="15" height="12.5" rx="1"/><path d="M1.9 6.8 H16.9 M1.9 10.8 H16.9 M6.9 6.8 V15.5 M11.9 6.8 V15.5"/></g></svg>
<div class="t" style="left:64.00px;top:996.35px;font-size:17.6px;line-height:30px;color:#bfcbd9;font-weight:normal;">退货通知单</div>
<svg class="r" style="left:25.80px;top:1066.60px;" width="19" height="19" viewBox="0 0 19 19"><g fill="none" stroke="#bfcbd9" stroke-width="1.2"><path d="M0.8 2 H6.5 Q8.5 2 9 3.5 Q9.5 2 11.5 2 H17.2 V16.5 H11.5 Q9.5 16.5 9 18 Q8.5 16.5 6.5 16.5 H0.8 Z"/></g><path d="M9 3.5 V16.5" stroke="#bfcbd9" stroke-width="1.6" opacity=".6"/></svg>
<div class="t" style="left:64.00px;top:1062.80px;font-size:17.6px;line-height:30px;color:#bfcbd9;font-weight:normal;">销售订单计划表</div>
<svg class="r" style="left:25.80px;top:1133.05px;" width="19" height="19" viewBox="0 0 19 19"><g fill="none" stroke="#bfcbd9" stroke-width="1.2"><path d="M0.8 2 H6.5 Q8.5 2 9 3.5 Q9.5 2 11.5 2 H17.2 V16.5 H11.5 Q9.5 16.5 9 18 Q8.5 16.5 6.5 16.5 H0.8 Z"/></g><path d="M9 3.5 V16.5" stroke="#bfcbd9" stroke-width="1.6" opacity=".6"/></svg>
<div class="t" style="left:64.00px;top:1129.25px;font-size:17.6px;line-height:30px;color:#bfcbd9;font-weight:normal;">销售订单明细表</div>
<svg class="r" style="left:25.80px;top:1199.50px;" width="19" height="19" viewBox="0 0 19 19"><g fill="none" stroke="#bfcbd9" stroke-width="1.2"><path d="M0.8 2 H6.5 Q8.5 2 9 3.5 Q9.5 2 11.5 2 H17.2 V16.5 H11.5 Q9.5 16.5 9 18 Q8.5 16.5 6.5 16.5 H0.8 Z"/></g><path d="M9 3.5 V16.5" stroke="#bfcbd9" stroke-width="1.6" opacity=".6"/></svg>
<div class="t" style="left:64.00px;top:1195.70px;font-size:17.6px;line-height:30px;color:#bfcbd9;font-weight:normal;">7天交货明细表</div>
<svg class="r" style="left:25.80px;top:1271.70px;" width="19" height="19" viewBox="0 0 19 19"><g fill="#bfcbd9"><rect x="0" y="7.5" width="4.6" height="10.5"/><rect x="6.8" y="0" width="4.6" height="18"/><rect x="13.6" y="4" width="4.6" height="14"/></g></svg>
<div class="t" style="left:64.00px;top:1267.10px;font-size:17.6px;line-height:30px;color:#bfcbd9;font-weight:normal;">销售报表</div>
<svg class="r" style="left:226.50px;top:1274.30px;" width="13" height="9" viewBox="0 0 13 9"><path d="M1 1.5 L6.5 7 L12 1.5" fill="none" stroke="#909399" stroke-width="1.3"/></svg>
<svg class="r" style="left:25.80px;top:1346.10px;" width="19" height="19" viewBox="0 0 19 19"><path d="M0.5 0.5 H12.5 V9 H9 V16.5 H0.5 Z" fill="#bfcbd9"/><rect x="2.5" y="2" width="7.5" height="1.6" fill="#304156" opacity=".6"/><path d="M9.4 5.8 H13.5 L17.5 10.3 V17 H9.4 Z" fill="none" stroke="#bfcbd9" stroke-width="1.2"/><path d="M13.5 5.8 V10.3 H17.5" fill="none" stroke="#bfcbd9" stroke-width="1.1"/></svg>
<div class="t" style="left:64.00px;top:1341.50px;font-size:17.6px;line-height:30px;color:#bfcbd9;font-weight:normal;">生产计划</div>
<svg class="r" style="left:226.50px;top:1348.70px;" width="13" height="9" viewBox="0 0 13 9"><path d="M1 1.5 L6.5 7 L12 1.5" fill="none" stroke="#909399" stroke-width="1.3"/></svg>
<svg class="r" style="left:25.80px;top:1420.50px;" width="19" height="19" viewBox="0 0 19 19"><path d="M0.5 0.5 H12.5 V9 H9 V16.5 H0.5 Z" fill="#bfcbd9"/><rect x="2.5" y="2" width="7.5" height="1.6" fill="#304156" opacity=".6"/><path d="M9.4 5.8 H13.5 L17.5 10.3 V17 H9.4 Z" fill="none" stroke="#bfcbd9" stroke-width="1.2"/><path d="M13.5 5.8 V10.3 H17.5" fill="none" stroke="#bfcbd9" stroke-width="1.1"/></svg>
<div class="t" style="left:64.00px;top:1415.90px;font-size:17.6px;line-height:30px;color:#bfcbd9;font-weight:normal;">采购管理</div>
<svg class="r" style="left:226.50px;top:1423.10px;" width="13" height="9" viewBox="0 0 13 9"><path d="M1 1.5 L6.5 7 L12 1.5" fill="none" stroke="#909399" stroke-width="1.3"/></svg>
<svg class="r" style="left:25.80px;top:1492.40px;" width="19" height="19" viewBox="0 0 19 19"><polygon points="18.10,9.00 17.93,9.78 17.47,10.49 16.82,11.10 16.14,11.60 15.56,12.06 15.15,12.55 14.93,13.15 14.82,13.89 14.73,14.73 14.53,15.59 14.14,16.34 13.55,16.88 12.79,17.13 11.94,17.08 11.10,16.82 10.32,16.48 9.63,16.21 9.00,16.10 8.37,16.21 7.68,16.48 6.90,16.82 6.06,17.08 5.21,17.13 4.45,16.88 3.86,16.34 3.47,15.59 3.27,14.73 3.18,13.89 3.07,13.15 2.85,12.55 2.44,12.06 1.86,11.60 1.18,11.10 0.53,10.49 0.07,9.78 -0.10,9.00 0.07,8.22 0.53,7.51 1.18,6.90 1.86,6.40 2.44,5.94 2.85,5.45 3.07,4.85 3.18,4.11 3.27,3.27 3.47,2.41 3.86,1.66 4.45,1.12 5.21,0.87 6.06,0.92 6.90,1.18 7.68,1.52 8.37,1.79 9.00,1.90 9.63,1.79 10.32,1.52 11.10,1.18 11.94,0.92 12.79,0.87 13.55,1.12 14.14,1.66 14.53,2.41 14.73,3.27 14.82,4.11 14.93,4.85 15.15,5.45 15.56,5.94 16.14,6.40 16.82,6.90 17.47,7.51 17.93,8.22" fill="#c4c4c4"/><circle cx="9" cy="9" r="3.4" fill="#304156"/></svg>
<div class="t" style="left:64.00px;top:1490.30px;font-size:17.6px;line-height:30px;color:#bfcbd9;font-weight:normal;">车间设置</div>
<svg class="r" style="left:226.50px;top:1497.50px;" width="13" height="9" viewBox="0 0 13 9"><path d="M1 1.5 L6.5 7 L12 1.5" fill="none" stroke="#909399" stroke-width="1.3"/></svg>
<svg class="r" style="left:25.80px;top:1569.30px;" width="19" height="19" viewBox="0 0 19 19"><path d="M0.5 0.5 H12.5 V9 H9 V16.5 H0.5 Z" fill="#bfcbd9"/><rect x="2.5" y="2" width="7.5" height="1.6" fill="#304156" opacity=".6"/><path d="M9.4 5.8 H13.5 L17.5 10.3 V17 H9.4 Z" fill="none" stroke="#bfcbd9" stroke-width="1.2"/><path d="M13.5 5.8 V10.3 H17.5" fill="none" stroke="#bfcbd9" stroke-width="1.1"/></svg>
<div class="t" style="left:64.00px;top:1564.70px;font-size:17.6px;line-height:30px;color:#bfcbd9;font-weight:normal;">生产管理</div>
<svg class="r" style="left:226.50px;top:1571.90px;" width="13" height="9" viewBox="0 0 13 9"><path d="M1 1.5 L6.5 7 L12 1.5" fill="none" stroke="#909399" stroke-width="1.3"/></svg>
<svg class="r" style="left:25.80px;top:1643.70px;" width="19" height="19" viewBox="0 0 19 19"><path d="M0.5 0.5 H12.5 V9 H9 V16.5 H0.5 Z" fill="#bfcbd9"/><rect x="2.5" y="2" width="7.5" height="1.6" fill="#304156" opacity=".6"/><path d="M9.4 5.8 H13.5 L17.5 10.3 V17 H9.4 Z" fill="none" stroke="#bfcbd9" stroke-width="1.2"/><path d="M13.5 5.8 V10.3 H17.5" fill="none" stroke="#bfcbd9" stroke-width="1.1"/></svg>
<div class="t" style="left:64.00px;top:1639.10px;font-size:17.6px;line-height:30px;color:#bfcbd9;font-weight:normal;">加工车间</div>
<svg class="r" style="left:226.50px;top:1646.30px;" width="13" height="9" viewBox="0 0 13 9"><path d="M1 1.5 L6.5 7 L12 1.5" fill="none" stroke="#909399" stroke-width="1.3"/></svg>
</body></html>
